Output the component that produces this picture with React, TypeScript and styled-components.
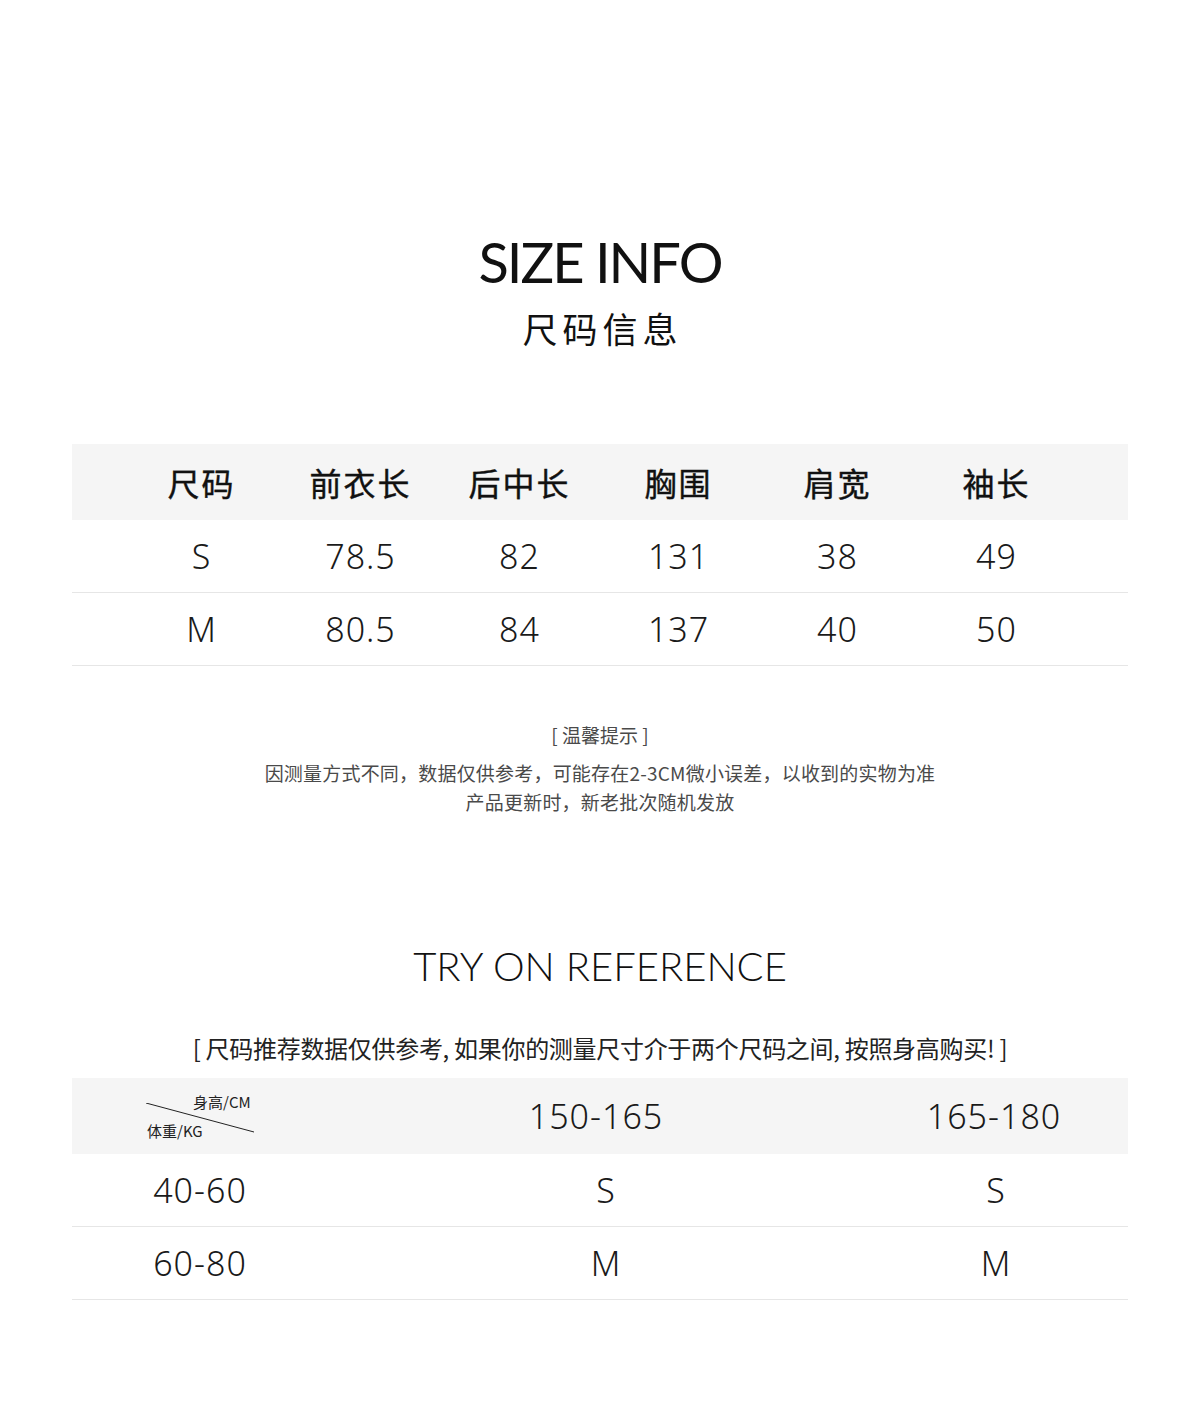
import * as React from "react";
import styled, { createGlobalStyle } from "styled-components";

const GlobalStyle = createGlobalStyle`
  html, body {
    margin: 0;
    padding: 0;
    background: #ffffff;
  }
  body {
    font-family: "Noto Sans", "Noto Sans CJK SC", sans-serif;
    color: #1a1a1a;
  }
`;

const sizeHead = ["尺码", "前衣长", "后中长", "胸围", "肩宽", "袖长"];
const sizeRows = [
  ["S", "78.5", "82", "131", "38", "49"],
  ["M", "80.5", "84", "137", "40", "50"],
];

const tryRows = [
  ["40-60", "S", "S"],
  ["60-80", "M", "M"],
];

const App = () => {
  return (
    <Page>
      <GlobalStyle />
      <TitleEn>SIZE INFO</TitleEn>
      <TitleCn>尺码信息</TitleCn>

      <SizeTable>
        <SizeRow head>
          {sizeHead.map((h) => (
            <HeadCell key={h}>{h}</HeadCell>
          ))}
        </SizeRow>
        {sizeRows.map((r) => (
          <SizeRow key={r[0]}>
            {r.map((c, i) => (
              <Cell key={i}>{c}</Cell>
            ))}
          </SizeRow>
        ))}
      </SizeTable>

      <Tips>
        <TipTitle>[ 温馨提示 ]</TipTitle>
        <TipLine>因测量方式不同，数据仅供参考，可能存在2-3CM微小误差，以收到的实物为准</TipLine>
        <TipLine>产品更新时，新老批次随机发放</TipLine>
      </Tips>

      <SubTitleEn>TRY ON REFERENCE</SubTitleEn>
      <Hint>[ 尺码推荐数据仅供参考, 如果你的测量尺寸介于两个尺码之间, 按照身高购买! ]</Hint>

      <TryTable>
        <TryRow head>
          <DiagCell>
            <DiagTop>身高/CM</DiagTop>
            <DiagLine viewBox="0 0 108 30" width="108" height="30">
              <line x1="0" y1="0" x2="108" y2="29" stroke="#222" strokeWidth="1" />
            </DiagLine>
            <DiagBottom>体重/KG</DiagBottom>
          </DiagCell>
          <Cell offset={-4}>150-165</Cell>
          <Cell offset={-6}>165-180</Cell>
        </TryRow>
        {tryRows.map((r) => (
          <TryRow key={r[0]}>
            <Cell>{r[0]}</Cell>
            <Cell offset={6}>{r[1]}</Cell>
            <Cell offset={-4}>{r[2]}</Cell>
          </TryRow>
        ))}
      </TryTable>
    </Page>
  );
};

const Page = styled.div`
  width: 1200px;
  height: 1414px;
  padding: 229px 72px 0;
  box-sizing: border-box;
  display: flex;
  flex-direction: column;
  align-items: center;
`;

const TitleEn = styled.div`
  font-family: Lato, "Noto Sans", sans-serif;
  font-size: 56px;
  line-height: 66px;
  font-weight: 400;
  letter-spacing: -2px;
  color: #111;
`;

const TitleCn = styled.div`
  margin-top: 11px;
  font-family: "Noto Sans CJK SC", sans-serif;
  font-size: 35px;
  line-height: 44px;
  letter-spacing: 5px;
  color: #111;
  padding-left: 5px;
`;

const SizeTable = styled.div`
  margin-top: 94px;
  width: 100%;
`;

const SizeRow = styled.div<{ head?: boolean }>`
  display: grid;
  grid-template-columns: repeat(6, 159px);
  padding-left: 50px;
  height: ${(p) => (p.head ? "76px" : "72px")};
  align-items: center;
  background: ${(p) => (p.head ? "#f5f5f5" : "#fff")};
  border-bottom: ${(p) => (p.head ? "none" : "1px solid #e6e6e6")};
`;

const HeadCell = styled.div`
  text-align: center;
  font-family: "Noto Sans CJK SC", sans-serif;
  font-size: 32px;
  font-weight: 400;
  letter-spacing: 2px;
  color: #111;
  -webkit-text-stroke: 0.4px #111;
`;

const Cell = styled.div<{ offset?: number }>`
  text-align: center;
  font-size: 34px;
  font-weight: 300;
  letter-spacing: 1px;
  color: #1a1a1a;
  transform: translateX(${(p) => p.offset || 0}px);
`;

const Tips = styled.div`
  margin-top: 56px;
  display: flex;
  flex-direction: column;
  align-items: center;
  font-family: "Noto Sans CJK SC", sans-serif;
  color: #4a4a4a;
`;

const TipTitle = styled.div`
  font-size: 19px;
  line-height: 26px;
  margin-bottom: 10px;
`;

const TipLine = styled.div`
  font-size: 19px;
  line-height: 29px;
  letter-spacing: 0.2px;
`;

const SubTitleEn = styled.div`
  margin-top: 125px;
  font-family: Lato, "Noto Sans", sans-serif;
  font-size: 40px;
  line-height: 50px;
  font-weight: 300;
  letter-spacing: 0px;
  color: #111;
`;

const Hint = styled.div`
  margin-top: 40px;
  font-family: "Noto Sans CJK SC", sans-serif;
  font-size: 24px;
  line-height: 34px;
  letter-spacing: -0.3px;
  color: #222;
`;

const TryTable = styled.div`
  margin-top: 13px;
  width: 100%;
`;

const TryRow = styled.div<{ head?: boolean }>`
  display: grid;
  grid-template-columns: 256px 544px 1fr;
  height: ${(p) => (p.head ? "76px" : "72px")};
  align-items: center;
  background: ${(p) => (p.head ? "#f5f5f5" : "#fff")};
  border-bottom: ${(p) => (p.head ? "none" : "1px solid #e6e6e6")};
`;

const DiagCell = styled.div`
  position: relative;
  height: 100%;
`;

const DiagLine = styled.svg`
  position: absolute;
  left: 74px;
  top: 25px;
`;

const DiagTop = styled.span`
  position: absolute;
  left: 121px;
  top: 13px;
  font-family: "Noto Sans CJK SC", sans-serif;
  font-size: 15px;
  color: #222;
`;

const DiagBottom = styled.span`
  position: absolute;
  left: 75px;
  top: 42px;
  font-family: "Noto Sans CJK SC", sans-serif;
  font-size: 15px;
  color: #222;
`;

export default App;
